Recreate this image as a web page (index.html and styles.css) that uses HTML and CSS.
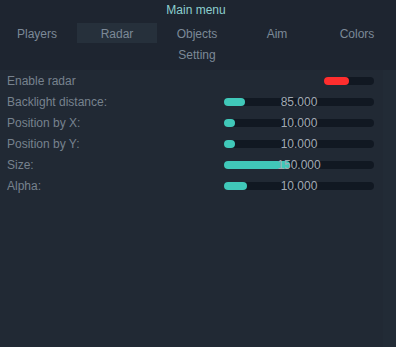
FILE: index.html
```html
<!DOCTYPE html>
<html>
<head>
<meta charset="utf-8">
<link rel="stylesheet" href="styles.css">
</head>
<body>
<div class="menu">
  <div class="title">Main menu</div>
  <div class="tabs">
    <div class="tab">Players</div>
    <div class="tab active">Radar</div>
    <div class="tab">Objects</div>
    <div class="tab">Aim</div>
    <div class="tab">Colors</div>
    <div class="tab"></div>
    <div class="tab"></div>
    <div class="tab second">Setting</div>
  </div>
  <div class="body">
    <div class="panel">
      <div class="row">
        <span class="label">Enable radar</span>
        <div class="toggle"><div class="toggle-fill"></div></div>
      </div>
      <div class="row">
        <span class="label">Backlight distance:</span>
        <div class="slider"><div class="fill" style="width:21px"></div><span class="value">85.000</span></div>
      </div>
      <div class="row">
        <span class="label">Position by X:</span>
        <div class="slider"><div class="fill" style="width:11px"></div><span class="value">10.000</span></div>
      </div>
      <div class="row">
        <span class="label">Position by Y:</span>
        <div class="slider"><div class="fill" style="width:11px"></div><span class="value">10.000</span></div>
      </div>
      <div class="row">
        <span class="label">Size:</span>
        <div class="slider"><div class="fill" style="width:66px"></div><span class="value">150.000</span></div>
      </div>
      <div class="row">
        <span class="label">Alpha:</span>
        <div class="slider"><div class="fill" style="width:23px"></div><span class="value">10.000</span></div>
      </div>
    </div>
    <div class="side"></div>
  </div>
</div>
</body>
</html>
```
FILE: styles.css
```css
html, body {
  margin: 0;
  padding: 0;
  background: #1e2530;
  width: 396px;
  height: 347px;
  overflow: hidden;
  font-family: "Liberation Sans", Arial, sans-serif;
  font-size: 12px;
}
.menu {
  width: 396px;
  height: 347px;
  display: flex;
  flex-direction: column;
}
.title {
  height: 23px;
  line-height: 21px;
  text-align: center;
  color: #8dcfcf;
  margin-left: -4px;
}
.tabs {
  display: grid;
  grid-template-columns: repeat(5, 80px);
  grid-template-rows: 20px 22px;
  margin-left: -3px;
}
.tab {
  box-sizing: border-box;
  padding-top: 2px;
  line-height: 18px;
  text-align: center;
  color: #7c8997;
}
.tab.second {
  padding-top: 3px;
}
.tab.active {
  background: #26303b;
}
.body {
  margin-top: 5px;
  display: flex;
}
.panel {
  width: 383px;
  background: #212934;
}
.side {
  flex: 1;
  background: #222b36;
  height: 277px;
}
.row {
  height: 21px;
  display: flex;
  align-items: center;
  justify-content: space-between;
  padding: 0 9px 0 7px;
}
.label {
  color: #77828e;
}
.slider {
  position: relative;
  width: 150px;
  height: 8px;
  border-radius: 4px;
  background: #111822;
  display: flex;
}
.fill {
  height: 8px;
  border-radius: 4px;
  background: #40c8b9;
}
.value {
  position: absolute;
  left: 0;
  right: 0;
  top: -4px;
  line-height: 16px;
  text-align: center;
  color: #a2aab3;
}
.toggle {
  width: 50px;
  height: 8px;
  border-radius: 4px;
  background: #111822;
  display: flex;
}
.toggle-fill {
  width: 25px;
  height: 8px;
  border-radius: 4px;
  background: #ff2e2e;
}
```
